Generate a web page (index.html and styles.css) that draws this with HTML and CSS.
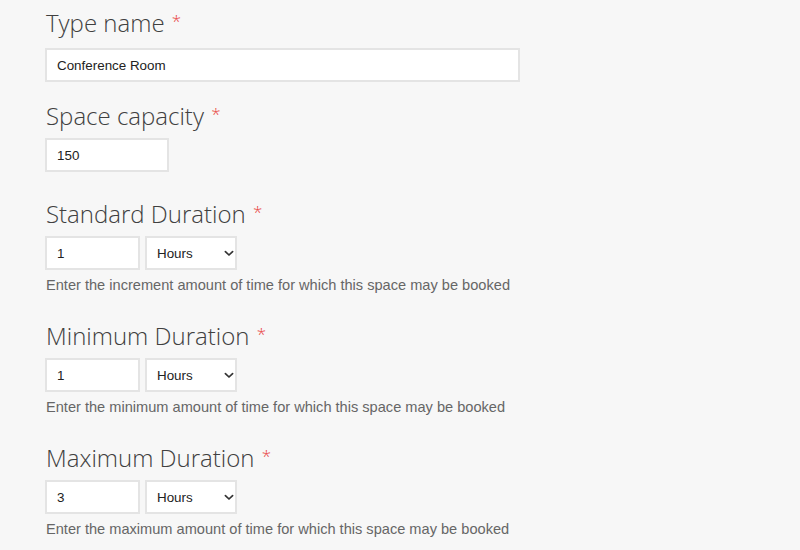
FILE: index.html
```html
<!DOCTYPE html>
<html lang="en">
<head>
<meta charset="utf-8">
<title>Space type</title>
<link rel="stylesheet" href="styles.css">
</head>
<body>
<form class="space-form">
  <div class="field field-first">
    <label class="field-label" for="type-name">Type name <span class="req">*</span></label>
    <input class="text-input wide" id="type-name" type="text" value="Conference Room">
  </div>

  <div class="field field-capacity">
    <label class="field-label" for="capacity">Space capacity <span class="req">*</span></label>
    <input class="text-input short" id="capacity" type="text" value="150">
  </div>

  <div class="field field-duration">
    <label class="field-label" for="std-dur">Standard Duration <span class="req">*</span></label>
    <div class="duration-row">
      <input class="text-input num" id="std-dur" type="text" value="1">
      <span class="select-wrap">
        <select class="unit-select"><option>Hours</option><option>Minutes</option><option>Days</option></select>
        <svg class="chevron" width="10" height="7" viewBox="0 0 10 7"><path d="M1.4 1.6 L5 5 L8.6 1.6" fill="none" stroke="#333" stroke-width="1.7" stroke-linecap="round" stroke-linejoin="round"/></svg>
      </span>
    </div>
    <p class="help">Enter the increment amount of time for which this space may be booked</p>
  </div>

  <div class="field field-duration">
    <label class="field-label" for="min-dur">Minimum Duration <span class="req">*</span></label>
    <div class="duration-row">
      <input class="text-input num" id="min-dur" type="text" value="1">
      <span class="select-wrap">
        <select class="unit-select"><option>Hours</option><option>Minutes</option><option>Days</option></select>
        <svg class="chevron" width="10" height="7" viewBox="0 0 10 7"><path d="M1.4 1.6 L5 5 L8.6 1.6" fill="none" stroke="#333" stroke-width="1.7" stroke-linecap="round" stroke-linejoin="round"/></svg>
      </span>
    </div>
    <p class="help">Enter the minimum amount of time for which this space may be booked</p>
  </div>

  <div class="field field-duration">
    <label class="field-label" for="max-dur">Maximum Duration <span class="req">*</span></label>
    <div class="duration-row">
      <input class="text-input num" id="max-dur" type="text" value="3">
      <span class="select-wrap">
        <select class="unit-select"><option>Hours</option><option>Minutes</option><option>Days</option></select>
        <svg class="chevron" width="10" height="7" viewBox="0 0 10 7"><path d="M1.4 1.6 L5 5 L8.6 1.6" fill="none" stroke="#333" stroke-width="1.7" stroke-linecap="round" stroke-linejoin="round"/></svg>
      </span>
    </div>
    <p class="help">Enter the maximum amount of time for which this space may be booked</p>
  </div>
</form>
</body>
</html>
```

FILE: styles.css
```css
html, body {
  margin: 0;
  padding: 0;
  background: #f7f7f7;
}

body {
  font-family: "Liberation Sans", Arial, sans-serif;
  color: #333;
}

.space-form {
  padding: 8px 0 0 45px;
}

.field {
  display: flex;
  flex-direction: column;
  align-items: flex-start;
}

.field-first { margin-bottom: 19px; }
.field-capacity { margin-bottom: 27px; }
.field-duration { margin-bottom: 26px; }

.field-label {
  display: block;
  font-family: "Open Sans", sans-serif;
  font-weight: 300;
  font-size: 24px;
  line-height: 30px;
  color: #404040;
  margin: 0 0 7px 1px;
}

.field-first .field-label { margin-bottom: 10px; }

.req {
  position: relative;
  top: 3px;
  color: #e8413c;
  font-size: 17px;
  vertical-align: top;
  line-height: 20px;
  margin-left: 1px;
}

.text-input {
  box-sizing: border-box;
  height: 34px;
  margin: 0;
  padding: 0 10px;
  border: 2px solid #e4e4e4;
  border-radius: 0;
  background: #fff;
  font-family: "Liberation Sans", Arial, sans-serif;
  font-size: 13.4px;
  color: #222;
  outline: none;
}

.wide { width: 475px; }
.short { width: 124px; }
.num { width: 95px; }

.duration-row {
  display: flex;
  gap: 5px;
}

.select-wrap {
  position: relative;
  display: block;
}

.unit-select {
  -webkit-appearance: none;
  appearance: none;
  box-sizing: border-box;
  width: 92px;
  height: 34px;
  margin: 0;
  padding: 0 0 0 10px;
  border: 2px solid #e4e4e4;
  border-radius: 0;
  background: #fff;
  font-family: "Liberation Sans", Arial, sans-serif;
  font-size: 13.4px;
  color: #222;
  outline: none;
}

.chevron {
  position: absolute;
  right: 3px;
  top: 14px;
  pointer-events: none;
}

.help {
  margin: 5px 0 0 1px;
  font-size: 14.6px;
  line-height: 20px;
  color: #666;
}
```
